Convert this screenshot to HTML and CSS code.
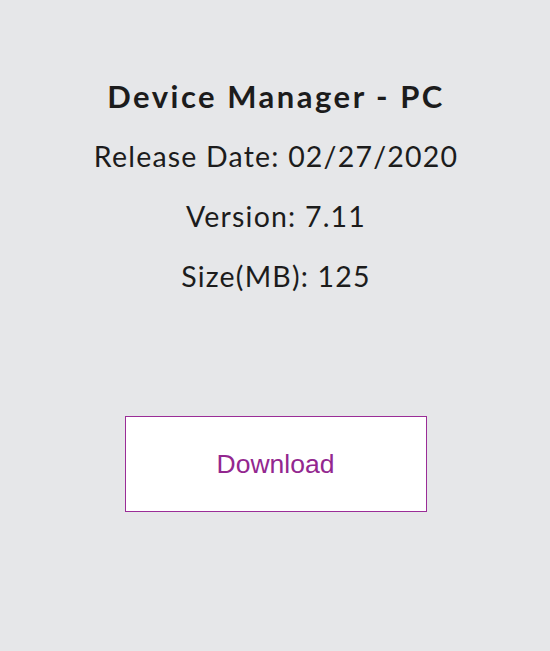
FILE: index.html
```html
<!DOCTYPE html>
<html>
<head>
<meta charset="utf-8">
<link rel="stylesheet" href="styles.css">
</head>
<body>
<main class="card">
  <h1 class="title">Device Manager - PC</h1>
  <p class="info">Release Date: 02/27/2020</p>
  <p class="info">Version: 7.11</p>
  <p class="info">Size(MB): 125</p>
  <a class="download" href="#">Download</a>
</main>
</body>
</html>
```
FILE: styles.css
```css
html, body {
  margin: 0;
  padding: 0;
  background: #e6e7e9;
}
body {
  width: 550px;
  height: 651px;
  font-family: "Lato", "DejaVu Sans", sans-serif;
  color: #1c1c1c;
}
.card {
  display: flex;
  flex-direction: column;
  align-items: center;
  padding-top: 76px;
}
.title {
  margin: 0 0 0 2px;
  font-size: 31px;
  font-weight: 700;
  line-height: 40px;
  letter-spacing: 2.5px;
}
.info {
  margin: 20px 0 0 2px;
  font-size: 28.5px;
  font-weight: 400;
  line-height: 40px;
  letter-spacing: 1.2px;
}
.download {
  margin-top: 120px;
  margin-left: 1px;
  box-sizing: border-box;
  width: 302px;
  height: 96px;
  display: flex;
  align-items: center;
  justify-content: center;
  background: #ffffff;
  border: 1px solid #9a2d97;
  color: #93278f;
  font-family: "Liberation Sans", Arial, sans-serif;
  font-size: 26.5px;
  text-decoration: none;
}
```
